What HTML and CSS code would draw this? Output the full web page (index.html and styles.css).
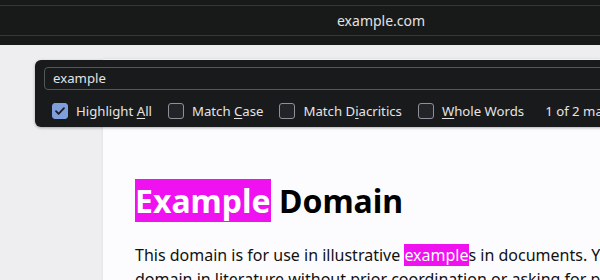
FILE: index.html
```html
<!DOCTYPE html>
<html lang="en">
<head>
    <meta charset="UTF-8">
    <title>Example Domain</title>
    <link rel="stylesheet" href="styles.css">
</head>
<body>

<div class="titlebar">
    <div class="titlebar-inner">example.com</div>
</div>

<div class="viewport">
    <div class="page">
        <h1><span class="hit">Example</span> Domain</h1>
        <p>This domain is for use in illustrative <span class="hit">example</span>s in documents. You may use this<br>
        domain in literature without prior coordination or asking for permission.</p>
    </div>

    <!-- find bar sits over the page -->
    <div class="findbar">
        <div class="find-input">example</div>
        <div class="find-options">
            <label class="opt"><span class="box checked">
                <svg width="12" height="12" viewBox="0 0 12 12"><path d="M2 6.2l2.6 2.6L10 3.2" fill="none" stroke="#1c1b22" stroke-width="1.8" stroke-linecap="round" stroke-linejoin="round"/></svg>
            </span><span>Highlight <u>A</u>ll</span></label>
            <label class="opt"><span class="box"></span><span>Match <u>C</u>ase</span></label>
            <label class="opt"><span class="box"></span><span>Match D<u>i</u>acritics</span></label>
            <label class="opt"><span class="box"></span><span><u>W</u>hole Words</span></label>
            <span class="count">1 of 2 matches</span>
        </div>
    </div>
</div>

</body>
</html>
```

FILE: styles.css
```css
body {
    margin: 0;
    font-family: "Noto Sans", sans-serif;
    background: #eeeef0;
    overflow: hidden;
}
.titlebar {
    height: 45px;
    background: #181a1a;
    padding-top: 5px;
    box-sizing: border-box;
}
.titlebar-inner {
    height: 31px;
    border-top: 1px solid #35373a;
    border-bottom: 1px solid #35373a;
    box-sizing: border-box;
    color: #e2e2e2;
    font-size: 14px;
    line-height: 30px;
    padding-left: 337px;
}
.viewport {
    position: relative;
    height: 235px;
    padding-top: 14px;
    box-sizing: border-box;
    overflow: hidden;
}
.page {
    margin-left: 103px;
    background: #fcfcfe;
    box-shadow: 0 0 3px rgba(0, 0, 0, 0.08);
    padding: 120px 0 40px 32px;
    height: 300px;
    color: #000;
    white-space: nowrap;
}
h1 {
    font-size: 32px;
    font-weight: 700;
    line-height: 43px;
    margin: 0 0 21px;
}
p {
    font-size: 16px;
    line-height: 24px;
    margin: 0;
    color: #111;
}
.hit {
    background: #ef11ef;
    color: #fff;
}
.findbar {
    position: absolute;
    top: 15px;
    left: 35px;
    width: 600px;
    height: 67px;
    background: #191a1b;
    border-radius: 6px;
    box-shadow: 0 1px 3px rgba(0, 0, 0, 0.3);
    padding: 7px 0 0 9px;
    box-sizing: border-box;
    color: #e4e4e4;
    font-size: 13.2px;
}
.find-input {
    height: 23px;
    border: 1px solid #55565c;
    border-radius: 4px;
    box-sizing: border-box;
    padding-left: 8px;
    line-height: 21px;
}
.find-options {
    display: flex;
    align-items: center;
    height: 30px;
    margin-top: 6px;
    padding-left: 8px;
    white-space: nowrap;
}
.opt {
    display: flex;
    align-items: center;
    margin-right: 16px;
}
.opt u {
    text-underline-offset: 2px;
}
.box {
    width: 16px;
    height: 16px;
    box-sizing: border-box;
    border: 1.5px solid #8f8f9d;
    border-radius: 3px;
    background: #232428;
    margin-right: 8px;
    display: flex;
    align-items: center;
    justify-content: center;
}
.box.checked {
    background: #7f9fdc;
    border-color: #7f9fdc;
}
.count {
    margin-left: 5px;
}
```
